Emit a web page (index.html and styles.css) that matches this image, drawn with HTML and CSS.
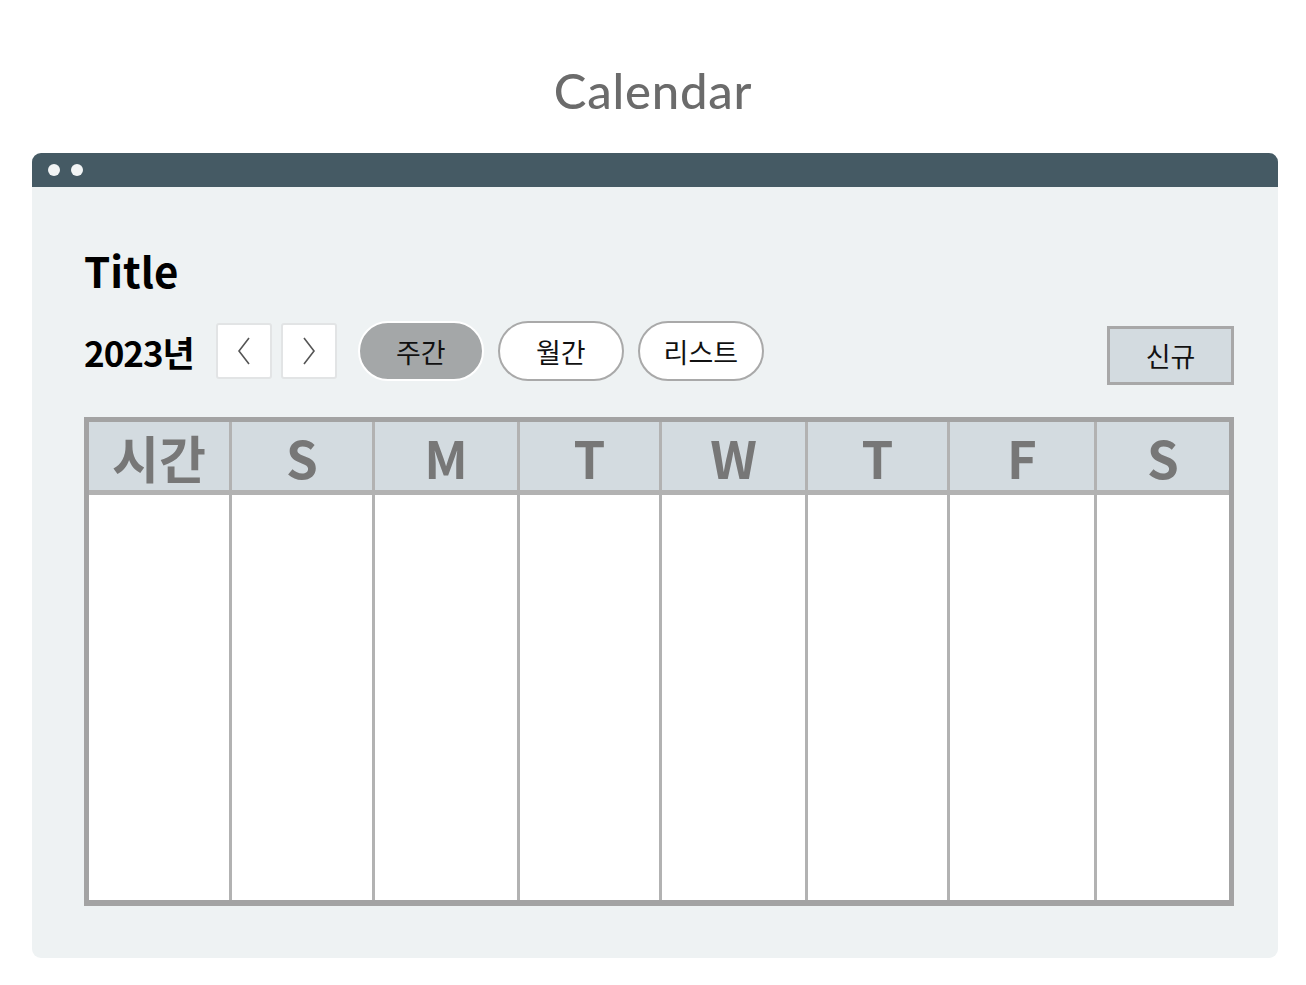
FILE: index.html
```html
<!DOCTYPE html>
<html lang="ko">
<head>
<meta charset="utf-8">
<title>Calendar</title>
<link rel="stylesheet" href="styles.css">
</head>
<body>
<h1 class="page-title">Calendar</h1>
<div class="window">
  <div class="window-bar">
    <span class="dot"></span>
    <span class="dot"></span>
  </div>
  <div class="window-body">
    <h2 class="title">Title</h2>
    <div class="toolbar">
      <span class="year">2023년</span>
      <button class="nav-btn" aria-label="이전">
        <svg width="14" height="28" viewBox="0 0 14 28"><polyline points="12,1 2,14 12,27" fill="none" stroke="#555" stroke-width="1.6"/></svg>
      </button>
      <button class="nav-btn" aria-label="다음">
        <svg width="14" height="28" viewBox="0 0 14 28"><polyline points="2,1 12,14 2,27" fill="none" stroke="#555" stroke-width="1.6"/></svg>
      </button>
      <div class="pills">
        <button class="pill active">주간</button>
        <button class="pill">월간</button>
        <button class="pill">리스트</button>
      </div>
      <button class="new-btn">신규</button>
    </div>
    <div class="calendar">
      <div class="head">시간</div>
      <div class="head">S</div>
      <div class="head">M</div>
      <div class="head">T</div>
      <div class="head">W</div>
      <div class="head">T</div>
      <div class="head">F</div>
      <div class="head">S</div>
      <div class="cell"></div>
      <div class="cell"></div>
      <div class="cell"></div>
      <div class="cell"></div>
      <div class="cell"></div>
      <div class="cell"></div>
      <div class="cell"></div>
      <div class="cell"></div>
    </div>
  </div>
</div>
</body>
</html>
```

FILE: styles.css
```css
* { box-sizing: border-box; }
html, body { margin: 0; padding: 0; background: #ffffff; }
body {
  font-family: "Noto Sans CJK KR", "Noto Sans", sans-serif;
  width: 1306px;
  height: 985px;
}
.page-title {
  margin: 0;
  height: 153px;
  padding-top: 60px;
  text-align: center;
  font-family: Lato, "Noto Sans", sans-serif;
  font-weight: 500;
  font-size: 49px;
  line-height: 60px;
  color: #6b6b6b;
  letter-spacing: 0.8px;
}
.window {
  margin: 0 28px 0 32px;
  width: 1246px;
  border-radius: 9px;
  overflow: hidden;
  background: #eef2f3;
}
.window-bar {
  height: 34px;
  background: #455a64;
  display: flex;
  align-items: center;
  padding-left: 16px;
  gap: 11px;
}
.dot {
  width: 12px;
  height: 12px;
  border-radius: 50%;
  background: #f2f4f5;
}
.window-body {
  padding: 58px 44px 52px 52px;
}
.title {
  margin: 0;
  font-size: 42px;
  line-height: 50px;
  font-weight: 700;
  color: #000;
}
.toolbar {
  display: flex;
  align-items: center;
  margin-top: 26px;
  height: 60px;
}
.year {
  font-size: 35px;
  font-weight: 700;
  letter-spacing: -1px;
  color: #000;
  margin-right: 22px;
  line-height: 1;
}
.nav-btn {
  width: 56px;
  height: 56px;
  background: #fff;
  border: 2px solid #e2e4e5;
  border-radius: 3px;
  display: flex;
  align-items: center;
  justify-content: center;
  padding: 0;
  margin-right: 9px;
}
.pills {
  display: flex;
  gap: 14px;
  margin-left: 12px;
}
.pill {
  width: 126px;
  height: 60px;
  border-radius: 30px;
  border: 2px solid #a9a9a9;
  background: #fff;
  font-family: "Noto Sans CJK KR", sans-serif;
  font-size: 27px;
  color: #111;
  padding: 0;
}
.pill.active {
  background: #a4a7a8;
  border-color: #ffffff;
}
.new-btn {
  margin-left: auto;
  margin-top: 8px;
  width: 127px;
  height: 59px;
  background: #d3dbe0;
  border: 3px solid #a8a8a8;
  border-radius: 0;
  font-family: "Noto Sans CJK KR", sans-serif;
  font-size: 27px;
  color: #111;
  padding: 0;
}
.calendar {
  margin-top: 36px;
  display: grid;
  grid-template-columns: 140px 140px 142px 139px 143px 139px 144px 1fr;
  grid-template-rows: 68px 405px;
  column-gap: 3px;
  row-gap: 5px;
  background: #b2b2b2;
  border: 5px solid #a3a3a3;
  border-bottom-width: 6px;
}
.head {
  background: #d3dbe0;
  display: flex;
  align-items: center;
  justify-content: center;
  font-size: 51px;
  font-weight: 700;
  color: #777;
  line-height: 1;
  padding-top: 2px;
}
.cell {
  background: #fff;
}
```
